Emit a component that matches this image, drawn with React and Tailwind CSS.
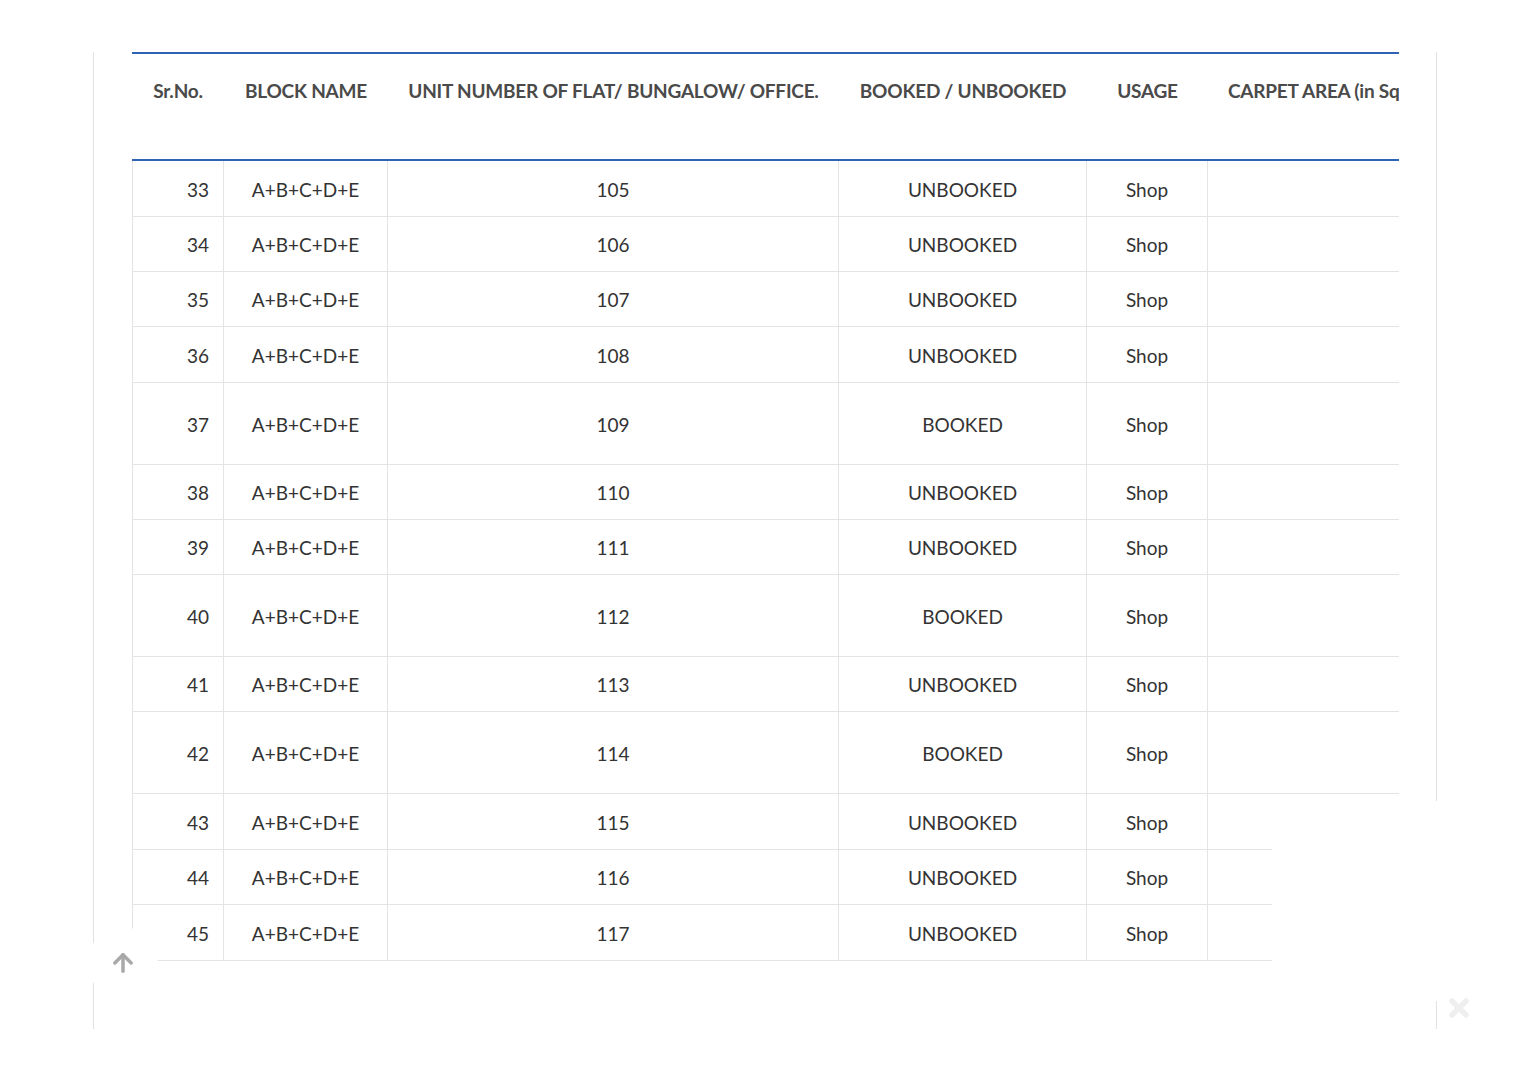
import { ArrowUp } from 'lucide-react'

const rows = [
  { no: 33, unit: 105, status: 'UNBOOKED', h: 56 },
  { no: 34, unit: 106, status: 'UNBOOKED', h: 55 },
  { no: 35, unit: 107, status: 'UNBOOKED', h: 55 },
  { no: 36, unit: 108, status: 'UNBOOKED', h: 56 },
  { no: 37, unit: 109, status: 'BOOKED', h: 82 },
  { no: 38, unit: 110, status: 'UNBOOKED', h: 55 },
  { no: 39, unit: 111, status: 'UNBOOKED', h: 55 },
  { no: 40, unit: 112, status: 'BOOKED', h: 82 },
  { no: 41, unit: 113, status: 'UNBOOKED', h: 55 },
  { no: 42, unit: 114, status: 'BOOKED', h: 82 },
  { no: 43, unit: 115, status: 'UNBOOKED', h: 56 },
  { no: 44, unit: 116, status: 'UNBOOKED', h: 55 },
  { no: 45, unit: 117, status: 'UNBOOKED', h: 56 },
]

const cell = 'border-b border-r border-[#e4e4e4] align-middle pt-[3px]'
const head = 'whitespace-nowrap border-y-2 border-[#2f63b3] pt-[23px] align-top text-[19px] font-bold tracking-[-0.22px] text-[#4a4a4a]'

export default function App() {
  return (
    <div className="relative h-[1080px] w-full overflow-hidden bg-white font-['Lato','Noto_Sans',sans-serif]">
      {/* page frame */}
      <div className="ml-[93px] mt-[52px] h-[977px] w-[1344px] border-x border-[#e2e2e2] pl-[38px]">
        <div className="w-[1267px] overflow-hidden">
          <table className="w-[1700px] table-fixed border-separate border-spacing-0 text-[#333]">
            <colgroup>
              <col className="w-[92px]" />
              <col className="w-[164px]" />
              <col className="w-[451px]" />
              <col className="w-[248px]" />
              <col className="w-[121px]" />
              <col className="w-[320px]" />
              <col />
            </colgroup>
            <thead>
              <tr className="h-[109px]">
                {['Sr.No.', 'BLOCK NAME', 'UNIT NUMBER OF FLAT/ BUNGALOW/ OFFICE.', 'BOOKED / UNBOOKED', 'USAGE'].map((t) => (
                  <th key={t} className={`${head} px-1 text-center`}>
                    {t}
                  </th>
                ))}
                <th className={`${head} pl-5 text-left`}>CARPET AREA (in Sq. Mtr.)</th>
                <th className={`${head} pl-5 text-left`}>AREA OF BALCONY</th>
              </tr>
            </thead>
            <tbody className="text-[19px]">
              {rows.map((r) => (
                <tr key={r.no} style={{ height: r.h }}>
                  <td className={`${cell} border-l pr-[14px] text-right`}>{r.no}</td>
                  <td className={`${cell} text-center`}>A+B+C+D+E</td>
                  <td className={`${cell} text-center`}>{r.unit}</td>
                  <td className={`${cell} text-center`}>{r.status}</td>
                  <td className={`${cell} text-center`}>Shop</td>
                  <td className={cell}></td>
                  <td className={cell}></td>
                </tr>
              ))}
            </tbody>
          </table>
        </div>
      </div>

      {/* scroll-to-top button */}
      <button className="absolute left-[88px] top-[927px] flex h-[72px] w-[70px] items-center justify-center rounded-full bg-white text-[#a9a9a9]">
        <ArrowUp size={28} strokeWidth={3} />
      </button>

      {/* floating widget area, bottom right */}
      <div className="absolute left-[1272px] top-[801px] h-[200px] w-[200px] bg-white" />
      <div className="absolute left-[1447px] top-[996px] text-[#efefef]">
        <svg width="24" height="24" viewBox="0 0 24 24" fill="none" stroke="currentColor" strokeWidth="5.5" strokeLinecap="round">
          <path d="M5 5l14 14M19 5L5 19" />
        </svg>
      </div>
    </div>
  )
}
